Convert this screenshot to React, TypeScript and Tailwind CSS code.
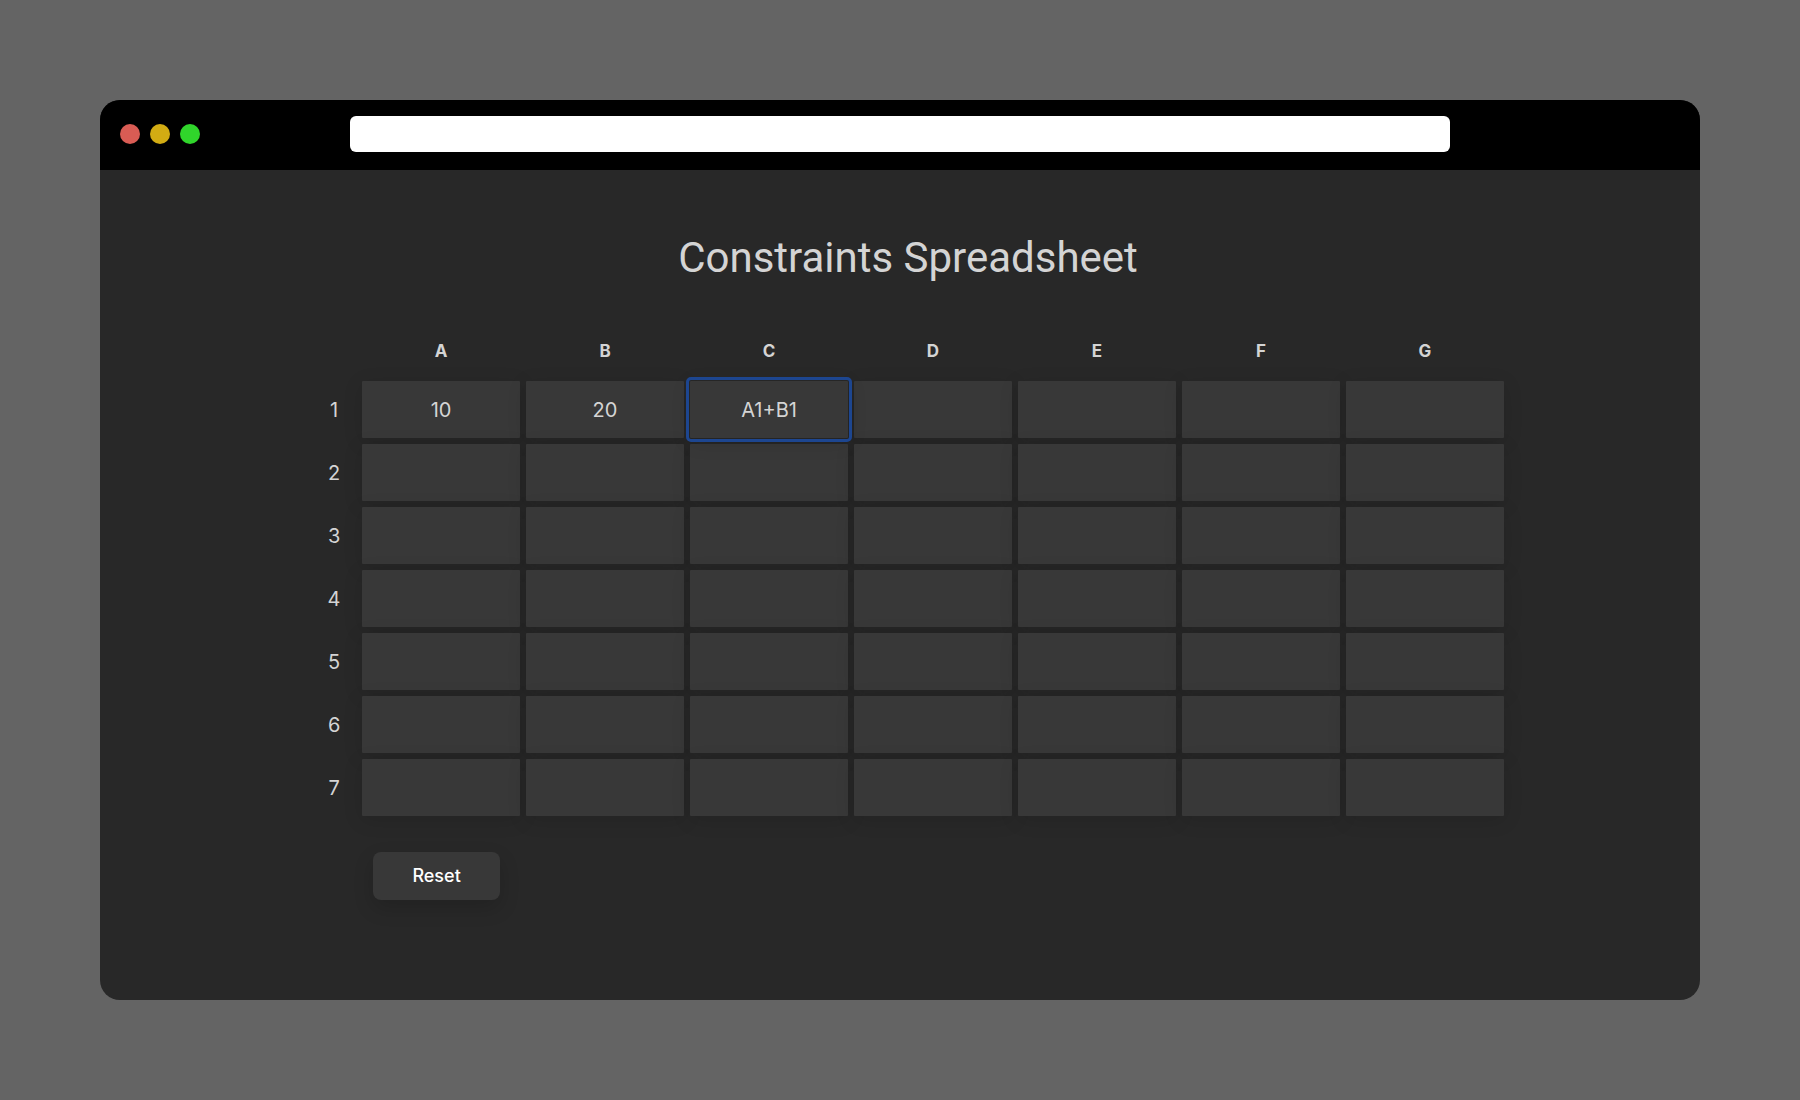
import { useState } from "react";

const COLUMNS = ["A", "B", "C", "D", "E", "F", "G"];
const ROWS = [1, 2, 3, 4, 5, 6, 7];

const INITIAL: Record<string, string> = { A1: "10", B1: "20", C1: "A1+B1" };

function TitleBar() {
  return (
    <header className="grid h-[70px] shrink-0 grid-cols-[1fr_minmax(0,1100px)_1fr] items-center bg-black pb-0.5">
      <div className="flex gap-2.5 pl-5">
        <button type="button" aria-label="Close" className="size-5 rounded-full bg-[#d95c54]" />
        <button type="button" aria-label="Minimize" className="size-5 rounded-full bg-[#d2ac13]" />
        <button type="button" aria-label="Zoom" className="size-5 rounded-full bg-[#30d52b]" />
      </div>
      <input aria-label="Address" className="h-9 w-full rounded-md bg-white px-3 text-black outline-none" />
    </header>
  );
}

type CellProps = {
  id: string;
  value: string;
  selected: boolean;
  onSelect: () => void;
  onChange: (value: string) => void;
};

function Cell({ id, value, selected, onSelect, onChange }: CellProps) {
  return (
    <input
      aria-label={id}
      value={value}
      onFocus={onSelect}
      onChange={(e) => onChange(e.target.value)}
      className={
        "block h-[57px] w-full rounded-[1px] bg-[#383838] text-center text-xl shadow-[0_4px_20px_rgba(0,0,0,0.12)] " +
        (selected
          ? "relative outline-3 outline-offset-1 outline-[#1d4690]"
          : "outline-none")
      }
    />
  );
}

export default function App() {
  const [cells, setCells] = useState(INITIAL);
  const [selected, setSelected] = useState("C1");

  return (
    <div className="flex min-h-screen flex-col bg-[#646464] p-[100px] font-['Inter',sans-serif]">
      <div className="flex flex-1 flex-col overflow-hidden rounded-[20px] bg-[#282828] text-[#d4d4d4]">
        <TitleBar />
        <main className="flex flex-col items-center pt-14 pb-16 pl-4">
          <h1 className="font-['Roboto',sans-serif] text-[42px] leading-[64px]">Constraints Spreadsheet</h1>
          <table className="mt-[34px] w-[76%] table-fixed border-separate border-spacing-1.5">
            <thead>
              <tr className="h-[45px]">
                <td className="w-11" />
                {COLUMNS.map((column) => (
                  <th key={column} scope="col" className="p-0 pb-1 text-[17px] leading-6 font-bold">
                    {column}
                  </th>
                ))}
              </tr>
            </thead>
            <tbody>
              {ROWS.map((row) => (
                <tr key={row}>
                  <th scope="row" className="p-0 text-xl font-normal">
                    {row}
                  </th>
                  {COLUMNS.map((column) => {
                    const id = column + row;
                    return (
                      <td key={id} className="p-0">
                        <Cell
                          id={id}
                          value={cells[id] ?? ""}
                          selected={selected === id}
                          onSelect={() => setSelected(id)}
                          onChange={(value) => setCells({ ...cells, [id]: value })}
                        />
                      </td>
                    );
                  })}
                </tr>
              ))}
            </tbody>
          </table>
          <div className="mt-[30px] w-[76%] pl-[67px]">
            <button
              type="button"
              onClick={() => setCells({})}
              className="h-12 w-[127px] rounded-lg bg-[#383838] text-lg font-medium text-white shadow-[0_8px_20px_rgba(0,0,0,0.16)]"
            >
              Reset
            </button>
          </div>
        </main>
      </div>
    </div>
  );
}
